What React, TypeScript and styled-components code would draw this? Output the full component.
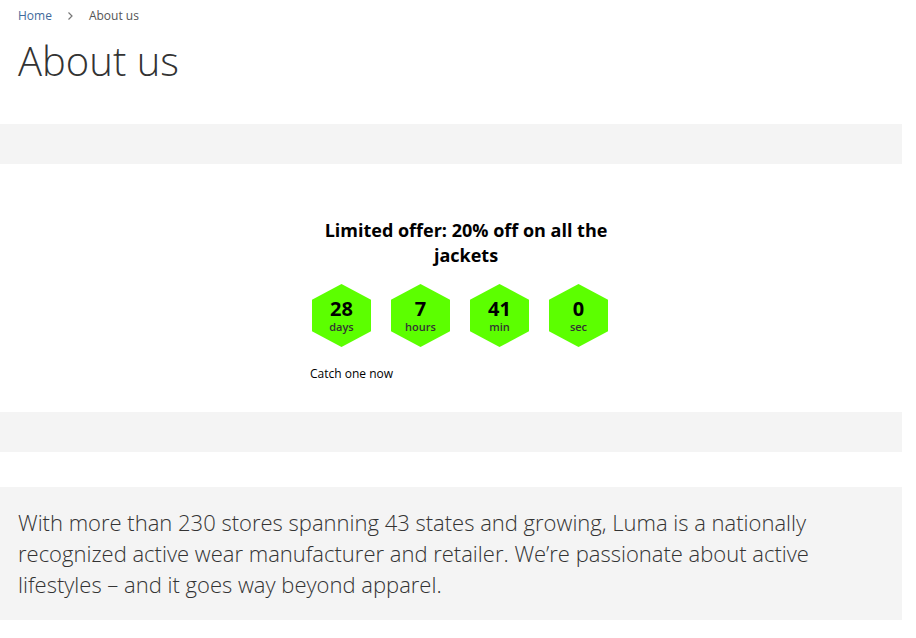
import React from 'react';
import styled, { createGlobalStyle } from 'styled-components';

const GlobalStyle = createGlobalStyle`
	body {
		margin: 0;
		background: #fff;
		font-family: 'Open Sans', 'Helvetica Neue', Helvetica, Arial, sans-serif;
		color: #333;
	}
`;

const units = [
	{ value: 28, label: 'days' },
	{ value: 7, label: 'hours' },
	{ value: 41, label: 'min' },
	{ value: 0, label: 'sec' }
];

const App: React.FC = () => (
	<>
		<GlobalStyle />
		<Page>
			<Breadcrumbs>
				<Crumb href="#">Home</Crumb>
				<Chevron viewBox="0 0 10 10" aria-hidden>
					<path d="M3.5 1.5 L7 5 L3.5 8.5" />
				</Chevron>
				<Current>About us</Current>
			</Breadcrumbs>
			<Title>About us</Title>
			<Band />
			<OfferSection>
				<Offer>
					<OfferTitle>Limited offer: 20% off on all the jackets</OfferTitle>
					<HexRow>
						{units.map((u) => (
							<Hex key={u.label}>
								<HexValue>{u.value}</HexValue>
								<HexLabel>{u.label}</HexLabel>
							</Hex>
						))}
					</HexRow>
					<CatchLink href="#">Catch one now</CatchLink>
				</Offer>
			</OfferSection>
			<Band />
			<Spacer />
			<Intro>
				With more than 230 stores spanning 43 states and growing, Luma is a nationally recognized active
				wear manufacturer and retailer. We’re passionate about active lifestyles – and it goes way beyond
				apparel.
			</Intro>
		</Page>
	</>
);

export default App;

const Page = styled.div`
	width: 902px;
`;

const Breadcrumbs = styled.nav`
	display: flex;
	align-items: center;
	gap: 8px;
	padding: 7px 18px 0;
	height: 17px;
	font-size: 12px;
	line-height: 17px;
`;

const Crumb = styled.a`
	color: #3f6a9c;
	text-decoration: none;
`;

const Chevron = styled.svg`
	width: 10px;
	height: 10px;
	margin: 0 6px 0 5px;
	fill: none;
	stroke: #777;
	stroke-width: 1.2;
`;

const Current = styled.span`
	color: #555;
`;

const Title = styled.h1`
	margin: 0;
	padding: 11px 18px 0;
	height: 100px;
	box-sizing: border-box;
	font-size: 40px;
	font-weight: 300;
	line-height: 52px;
	color: #333;
`;

const Band = styled.div`
	height: 40px;
	background: #f4f4f4;
`;

const Spacer = styled.div`
	height: 35px;
`;

const OfferSection = styled.section`
	height: 248px;
	box-sizing: border-box;
	padding: 54px 0 0 310px;
`;

const Offer = styled.div`
	width: 312px;
	display: flex;
	flex-direction: column;
`;

const OfferTitle = styled.h2`
	margin: 0;
	font-size: 18px;
	font-weight: 700;
	line-height: 25px;
	text-align: center;
	color: #000;
`;

const HexRow = styled.div`
	display: flex;
	gap: 20px;
	margin: 16px 0 0 2px;
`;

const Hex = styled.div`
	width: 59px;
	height: 63px;
	background: #5cff00;
	clip-path: polygon(50% 0, 100% 25%, 100% 75%, 50% 100%, 0 75%, 0 25%);
	display: flex;
	flex-direction: column;
	align-items: center;
	justify-content: center;
	gap: 1px;
	padding-top: 1px;
	box-sizing: border-box;
`;

const HexValue = styled.span`
	font-size: 20px;
	font-weight: 700;
	line-height: 20px;
	color: #000;
`;

const HexLabel = styled.span`
	font-size: 11px;
	font-weight: 600;
	line-height: 14px;
	color: #333;
`;

const CatchLink = styled.a`
	margin-top: 18px;
	font-size: 12px;
	line-height: 17px;
	color: #000;
	text-decoration: none;
`;

const Intro = styled.p`
	margin: 0;
	background: #f4f4f4;
	width: 902px;
	box-sizing: border-box;
	padding: 20px 74px 20px 18px;
	font-size: 22px;
	font-weight: 300;
	line-height: 31px;
	color: #333;
`;
